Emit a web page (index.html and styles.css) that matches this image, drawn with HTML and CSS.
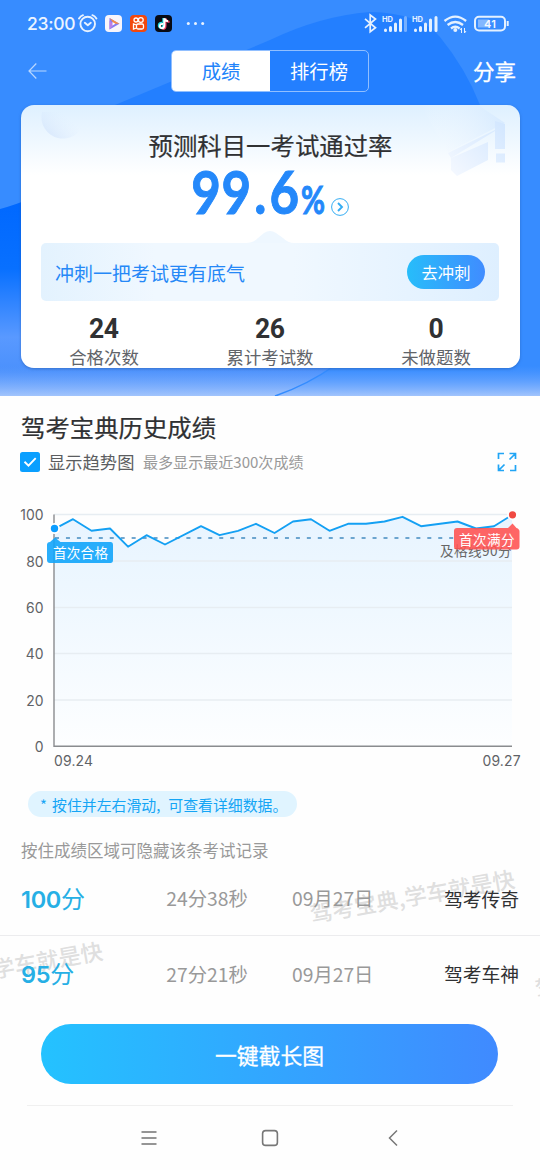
FILE: index.html
```html
<!DOCTYPE html>
<html lang="zh-CN">
<head>
<meta charset="utf-8">
<title>成绩</title>
<link rel="stylesheet" href="styles.css">
</head>
<body>
<main class="screen">
  <section class="hero">
    <svg class="hero-bg" viewBox="0 0 540 396" width="540" height="396">
      <defs>
        <linearGradient id="fade" x1="0" y1="0" x2="0" y2="1"><stop offset="0" stop-color="#69a4ff" stop-opacity="0"/><stop offset="1" stop-color="#a2c4fc"/></linearGradient>
        <linearGradient id="left" x1="0" y1="200" x2="0" y2="396" gradientUnits="userSpaceOnUse"><stop offset="0" stop-color="#0068ff"/><stop offset=".35" stop-color="#0870ff"/><stop offset=".7" stop-color="#5999ff"/><stop offset=".88" stop-color="#4a90fc"/><stop offset="1" stop-color="#5a9afd"/></linearGradient>
      </defs>
      <path fill="#378cff" d="M0 0H540V396H0z"/>
      <path fill="#237fff" d="M115 105 170 82 270 40Q320 16 370 12Q420 13 440 37Q466 69 480 105V350H115z"/>
      <path fill="url(#left)" d="M0 209Q30 201 70 180L334 366Q307 385 275 396H0z"/>
      <path fill="url(#fade)" d="M0 366H540V396H0z"/>
      <path fill="none" stroke="#338cff" stroke-width="1.5" d="M275 396Q307 385 334 366"/>
    </svg>
    <header class="statusbar">
      <span class="clock">23:00</span>
      <svg class="status-left" width="120" height="24" viewBox="78 12 120 24" fill="none">
        <g stroke="#e8f2ff" stroke-width="1.9" stroke-linecap="round" stroke-linejoin="round"><circle cx="87.7" cy="24" r="7.3"/><path d="m84.8 22.8 3 2.5 3-2.5M79 18.5q1.5-2.5 4-3.3M96.400 18.500q-1.500-2.500-4-3.300"/></g>
        <rect x="105" y="15" width="17" height="17" rx="4" fill="#f8f5fb"/>
        <path d="m109.500 18 10 5.700-10 5.800z" fill="#857bf2"/><path d="m109.500 18 10 5.700h-5.500z" fill="#f78b44"/><path d="m109.500 29.500v-9l4.500 4z" fill="#bb7fe6"/><path d="m112.500 22 2.900 1.700-2.900 1.800z" fill="#fff"/>
        <rect x="130" y="15" width="17" height="17" rx="4" fill="#f3480d"/>
        <g stroke="#fff" stroke-width="1.300"><circle cx="136" cy="20" r="2"/><circle cx="140.800" cy="20" r="2.400"/><rect x="136.500" y="24" width="7" height="5" rx="1.500"/><path d="m136.500 25-3-1v5l3-1"/></g>
        <rect x="155" y="15" width="17" height="17" rx="4" fill="#080b14"/>
        <g stroke-width="2"><path stroke="#21d9df" d="M162 22.800c-4-.5-4.300 5-1 5 2 0 2.300-1 2.300-3V18"/><path stroke="#f04464" d="M165.500 18.500c.5 2 1.500 3.200 4 3.400M162.500 29c2 0 3-1.300 3-3V19"/><path stroke="#fff" d="M163 24c-4-.7-4 4.200-1.200 4.200 1.800 0 2.500-1.200 2.500-3V18.200c.5 2 1.500 2.700 3.700 3"/></g>
        <g fill="#eaf3ff"><circle cx="188.300" cy="23.500" r="1.500"/><circle cx="195.500" cy="23.500" r="1.500"/></g>
      </svg>
      <svg class="status-more" width="8" height="24" viewBox="198 12 8 24"><circle cx="202.700" cy="23.500" r="1.500" fill="#eaf3ff"/></svg>
      <svg class="status-right" width="150" height="24" viewBox="362 12 150 24" fill="none">
        <path stroke="#e5f1ff" stroke-width="1.700" d="m365 18.800 10.500 9-5.300 4V15l5.300 4-10.500 8.800"/>
        <g fill="#e5f1ff"><text class="hd" x="382" y="21.500">HD</text><text class="hd" x="412" y="21.500">HD</text></g>
        <g stroke="#e5f1ff" stroke-width="3" stroke-linecap="round"><path d="M385.500 30v.5M390.500 27.500v3M395.500 24v6.500M400.500 20v10.500M415.500 30v.5M420.500 27.500v3M425.500 24v6.500M430.500 20v10.500M436 17.500v13"/><path stroke="#77b0ff" d="M405.500 17.500v13"/></g>
        <g stroke="#e5f1ff" stroke-width="2.300"><path d="M444.500 21q10.800-8.800 21.600 0M447.600 25q7.700-6 15.400 0M451 28.500q4.300-3.500 8.600 0"/></g>
        <circle cx="455.300" cy="30" r="2" fill="#e5f1ff"/><path stroke="#e5f1ff" d="M461.500 33v-5l-1.500 2M464.500 28v5l1.500-2"/>
        <rect x="475" y="16.800" width="30" height="13.600" rx="4" stroke="#e5f1ff" stroke-width="2"/>
        <path fill="#83b7ff" d="M478 19.500h11v8h-11z"/><path stroke="#e5f1ff" stroke-width="2" d="M507.700 21v5"/>
        <text class="battery" x="484" y="27.800" textLength="12">41</text>
      </svg>
    </header>
    <nav class="toolbar">
      <svg class="back" width="20" height="18" viewBox="0 0 20 18"><path d="M8.300 1.500 1 9l7.300 7.500M1 9h17.500" fill="none" stroke="#b9d7ff" stroke-width="1.200"/></svg>
      <div class="tabs"><span class="tab active">成绩</span><span class="tab">排行榜</span></div>
      <span class="share">分享</span>
    </nav>
    <article class="card">
      <svg class="card-art" width="499" height="263" viewBox="21 105 499 263">
        <defs>
          <linearGradient id="orb" x1="0" y1="1" x2="1" y2=".3"><stop stop-color="#c8dcfa"/><stop offset=".8" stop-color="#dfeefe" stop-opacity="0"/></linearGradient>
          <linearGradient id="art" x1="0" y1="1" x2="1" y2="0"><stop stop-color="#f6f9ff"/><stop offset="1" stop-color="#d1e6ff"/></linearGradient>
          <linearGradient id="mist" x1="0" y1="0" x2="1" y2="0"><stop stop-color="#fff" stop-opacity="0"/><stop offset="1" stop-color="#c9e2ff" stop-opacity=".5"/></linearGradient>
        </defs>
        <path fill="url(#orb)" opacity=".75" d="M42 112a21 21 0 0 0 42 10V112z"/>
        <path fill="url(#mist)" d="M420 105h58l27 18-57 29z"/>
        <path fill="url(#art)" d="M448 153 495 130V121L505 124V149H495V131L451 158zM451 158 488 142V160L457 176 451 170zM496 153.500h9v9h-9z"/>
      </svg>
      <h1 class="card-title">预测科目一考试通过率</h1>
      <div class="rate">
        <svg class="rate-value" width="136" height="52" viewBox="190 165 136 52"><text transform="scale(.85 1)" x="225 260.500 299 317" y="213.800" class="rate-number">99.6</text><text x="301" y="213.800" textLength="24" lengthAdjust="spacingAndGlyphs" class="rate-percent">%</text></svg>
        <svg class="go" width="18" height="18" viewBox="0 0 18 18" fill="none" stroke="#35adf3"><circle cx="9" cy="9" r="8.400"/><path stroke-width="1.900" d="m7 5 4 4-4 4"/></svg>
      </div>
      <div class="sprint">
        <svg class="notch" width="48" height="12" viewBox="0 0 48 12"><path d="M0 12Q7 12 12 7L18 2Q24-2 30 2L37 7Q42 12 48 12z" fill="#eef7ff"/></svg>
        <span class="sprint-text">冲刺一把考试更有底气</span><span class="sprint-btn">去冲刺</span>
      </div>
      <div class="stats">
        <div class="stat"><b>24</b><span>合格次数</span></div>
        <div class="stat"><b>26</b><span>累计考试数</span></div>
        <div class="stat"><b>0</b><span>未做题数</span></div>
      </div>
    </article>
  </section>
  <section class="history">
    <h2 class="heading">驾考宝典历史成绩</h2>
    <div class="options">
      <svg width="20" height="20" viewBox="0 0 20 20"><rect width="20" height="20" rx="2.500" fill="#0a9fff"/><path d="m4.500 9.800 4 3.800 7.200-7.500" fill="none" stroke="#fff" stroke-width="1.900"/></svg>
      <span class="trend">显示趋势图</span><span class="limit">最多显示最近300次成绩</span>
      <svg class="expand" width="20" height="20" viewBox="0 0 20 20" fill="none" stroke="#21a5f5" stroke-width="1.700"><path d="M1.500 7V1.500H7M12.500 1.500h6V7M18 2l-5.500 5.500M1.500 12.500v6H7M2 18l5.500-5.500M18.500 13v5.500H13"/></svg>
    </div>
    <svg class="chart" width="540" height="290" viewBox="0 490 540 290">
      <defs><linearGradient id="area" x1="0" y1="515" x2="0" y2="746" gradientUnits="userSpaceOnUse"><stop stop-color="#e8f4ff"/><stop offset=".3" stop-color="#edf7ff"/><stop offset="1" stop-color="#fdfeff"/></linearGradient></defs>
      <path fill="url(#area)" d="M54 529 73 519 92 531 110 528 128 547 147 535 165 544 201 526 219 535 238 531 256 524 274 533 293 521 311 519 329 531 348 524H366L384 522 402 517 421 526 457 521 476 528 494 526 512 515V746H54z"/>
      <path stroke="#e7edf2" stroke-width="1.300" d="M54 514.500H512M54 561H512M54 607.500H512M54 653.500H512M54 700H512"/>
      <path stroke="#8a8c8f" stroke-width="1.400" fill="none" d="M54 514.500V746.200H512"/>
      <path stroke="#438bc0" stroke-width="1.300" stroke-dasharray="4 6.950" d="M55 538H512"/>
      <path fill="none" stroke="#14a0f3" stroke-width="1.900" stroke-linejoin="round" d="M54.500 528.900 73 519.200 91.500 530.800 110 528.500 128 546.700 146.500 535.200 165 544.500 201 526.200 219.500 535.200 238 530.800 256 523.800 274.500 533 293 521.500 311 519.200 329.500 530.800 348 523.800H366L384.500 521.500 402.500 516.800 421 526.200 457.500 521.500 476 528.500 494 526.200 512 515"/>
      <text class="pass" x="440" y="556" textLength="71.500">及格线90分</text>
      <path fill="#12a5fb" fill-opacity=".9" d="M50 542 55 537.500 60.500 542H110.500Q113 542 113 545V560Q113 563 110.500 563H50Q47 563 47 560V545Q47 542 50 542z"/>
      <text class="flag" x="53" y="557.500" textLength="55">首次合格</text>
      <path fill="#ff5150" fill-opacity=".88" d="M457 528H508L512.500 523.500 516.500 528Q519.500 529 519.500 531.500V546.500Q519.500 549.500 516.500 549.500H457Q454 549.500 454 546.500V531Q454 528 457 528z"/>
      <text class="flag" x="459" y="544.500" textLength="55.500">首次满分</text>
      <circle cx="54.500" cy="528.500" r="4.600" fill="#0b9dff" stroke="#fff" stroke-width="1.800"/>
      <circle cx="512.500" cy="514.800" r="4.500" fill="#f04a42" stroke="#fff" stroke-width="1.800"/>
      <g class="axis"><g text-anchor="end"><text x="43.500" y="520">100</text><text x="43.500" y="566.500">80</text><text x="43.500" y="613">60</text><text x="43.500" y="659">40</text><text x="43.500" y="705.500">20</text><text x="43.500" y="752">0</text></g><text x="54" y="766" textLength="39">09.24</text><text x="482.500" y="766" textLength="38">09.27</text></g>
    </svg>
    <div class="tip"><span class="star">*</span><span class="tip-a">按住并左右滑动</span><span class="comma">,</span><span>可查看详细数据。</span></div>
    <p class="hint">按住成绩区域可隐藏该条考试记录</p>
    <div class="records">
      <div class="record"><span class="score"><b>100</b>分</span><span class="time">24分38秒</span><span class="date">09月27日</span><span class="rank">驾考传奇</span></div>
      <div class="record"><span class="score"><b>95</b>分</span><span class="time">27分21秒</span><span class="date">09月27日</span><span class="rank">驾考车神</span></div>
      <span class="watermark wm-one">驾考宝典,学车就是快</span>
      <span class="watermark wm-two">驾考宝典,学车就是快</span>
      <span class="watermark wm-three">驾考宝典,学车就是快</span>
    </div>
  </section>
  <div class="capture">一键截长图</div>
  <footer class="system-nav">
    <svg class="nav-menu" width="16" height="16" viewBox="0 0 16 16"><path d="M.500 2h15M.500 8h15M.500 14h15" stroke="#737373" stroke-width="1.300"/></svg>
    <svg class="nav-home" width="18" height="18" viewBox="0 0 18 18"><rect x="1.600" y="1.600" width="14.800" height="14.800" rx="3" fill="none" stroke="#777" stroke-width="1.600"/></svg>
    <svg class="nav-back" width="10" height="18" viewBox="0 0 10 18"><path d="M9 1.500 1.500 9 9 16.500" fill="none" stroke="#777" stroke-width="1.500"/></svg>
  </footer>
</main>
</body>
</html>
```

FILE: styles.css
```css
* { box-sizing: border-box; }
body { margin: 0; background: #fff; font-family: "Noto Sans CJK SC", sans-serif; }
svg { display: block; flex-shrink: 0; }
h1, h2, p { margin: 0; }
.screen { width: 540px; height: 1170px; overflow: hidden; background: #fefefe; white-space: nowrap; }
.hero { position: relative; height: 396px; overflow: hidden; isolation: isolate; }
.hero-bg { position: absolute; inset: 0; z-index: -1; }
.statusbar { height: 48px; padding-top: 12px; padding-left: 27px; display: flex; color: #ecf4ff; }
.clock { width: 51px; font: 500 17.500px/24px Inter, sans-serif; letter-spacing: -.3px; }
.status-right { margin-left: 156px; }
.hd { font: 700 7.500px Inter, sans-serif; }
.battery { font: 600 11px Inter, sans-serif; fill: #f2f8ff; }
.toolbar { height: 46px; display: flex; align-items: center; padding: 0 24px 0 28px; }
.tabs { display: flex; width: 198px; height: 42px; margin-left: 123px; border: 1px solid #91bfff; border-radius: 5px; overflow: hidden; }
.tab { width: 98px; color: #fff; font-size: 19.300px; line-height: 41px; text-align: center; }
.tab.active { background: #fff; color: #2284fa; }
.share { margin-left: auto; color: #fff; font-size: 21.500px; -webkit-text-stroke: .3px #fff; line-height: 40px; }
.card { position: relative; width: 499px; height: 263px; margin: 11px 0 0 21px; border-radius: 13px; background: linear-gradient(#def0ff, #fff 70px); box-shadow: 0 1px 3px #245bad99; overflow: hidden; }
.card-art { position: absolute; inset: 0; }
.card-title { position: relative; padding-top: 22px; font-size: 24.400px; font-weight: 400; -webkit-text-stroke: .2px #303133; line-height: 36px; text-align: center; color: #303133; }
.rate { position: relative; display: flex; align-items: flex-end; height: 54px; padding-left: 169px; }
.rate-value { overflow: visible; font-family: Lato, sans-serif; font-weight: 700; fill: #2488fa; }
.rate-number { font-size: 60px; stroke: #2488fa; stroke-width: 1px; }
.rate-percent { font-size: 39px; stroke: #2488fa; stroke-width: 1px; }
.go { margin: 0 0 1px 5px; }
.sprint { position: relative; display: flex; align-items: center; justify-content: space-between; width: 458px; height: 58px; margin: 26px 0 0 20px; padding: 0 14px; border-radius: 5px; background: linear-gradient(90deg, #e3f2fe, #f0f8ff 25%, #f0f8ff 55%, #deefff); }
.notch { position: absolute; top: -12px; left: 205px; }
.sprint-text { font-size: 19px; color: #2588f7; }
.sprint-btn { width: 78px; height: 34px; border-radius: 17px; background: linear-gradient(90deg, #27bdfa, #408cff); color: #fff; font-size: 16.300px; line-height: 34px; text-align: center; }
.stats { display: grid; grid-template-columns: repeat(3, 166px); padding-top: 11px; }
.stat { display: flex; flex-direction: column; align-items: center; }
.stat b { color: #303133; font: 700 28.500px/33px Roboto, sans-serif; letter-spacing: -.7px; transform: scaleX(.93); }
.stat span { font-size: 17.400px; line-height: 23px; color: #616469; }
.heading { padding: 13px 0 1px 21px; font-size: 24.400px; font-weight: 400; -webkit-text-stroke: .2px #303133; line-height: 36px; color: #303133; }
.options { display: flex; align-items: center; height: 32px; padding: 0 23px 0 20px; }
.trend { width: 103px; padding-left: 8px; font-size: 17.300px; line-height: 24px; padding-bottom: 1px; color: #5b5d60; }
.limit { font-size: 15.050px; line-height: 24px; padding-bottom: 1px; color: #999; }
.expand { margin-left: auto; }
.chart { margin-top: 12px; }
.axis { font: 13.900px Inter, sans-serif; fill: #606266; }
.flag { font-size: 13.600px; fill: #fff; }
.pass { font-size: 13.600px; fill: #666; }
.tip { display: flex; width: 269px; height: 26px; margin: 11px 0 0 28px; padding-left: 12px; border-radius: 13px; background: #e0f4ff; color: #15a5f5; font-size: 14.900px; line-height: 27px; }
.star { width: 12px; }
.comma { width: 12px; }
.hint { margin: 20px 0 0 21px; font-size: 16.500px; line-height: 26px; height: 24px; color: #999; }
.records { position: relative; height: 151px; overflow: hidden; }
.record { position: relative; z-index: 1; display: grid; grid-template-columns: 134px 123px 119px 1fr; align-items: center; height: 75px; padding: 0 21px; font-size: 19.300px; color: #999; }
.record:first-child { border-bottom: 1px solid #ececee; }
.score { color: #26afe5; font-size: 24px; padding-bottom: 2px; }
.score b { font: 600 23.500px Inter, sans-serif; letter-spacing: -.3px; }
.time { justify-self: center; margin-left: -19px; }
.date { margin-left: 14px; }
.rank { justify-self: end; color: #303133; font-size: 18.800px; }
.watermark { position: absolute; transform: rotate(-10deg); transform-origin: 0 50%; font-size: 22.300px; font-weight: 500; line-height: 30px; color: #dfdfdf; }
.wm-one { left: 310px; top: 37px; }
.wm-two { left: -102px; top: 109px; }
.wm-three { left: 535px; top: 112px; }
.capture { width: 457px; height: 60px; margin: 12px 0 0 41px; border-radius: 30px; background: linear-gradient(90deg, #24c2ff, #408aff); color: #fff; text-align: center; font-size: 21.800px; -webkit-text-stroke: .3px #fff; line-height: 61px; }
.system-nav { display: flex; align-items: center; width: 486px; height: 65px; margin: 21px 0 0 27px; border-top: 1px solid #f0f0f0; }
.nav-menu { margin-left: 114px; }
.nav-home { margin-left: 104px; }
.nav-back { margin-left: 109px; }
```
